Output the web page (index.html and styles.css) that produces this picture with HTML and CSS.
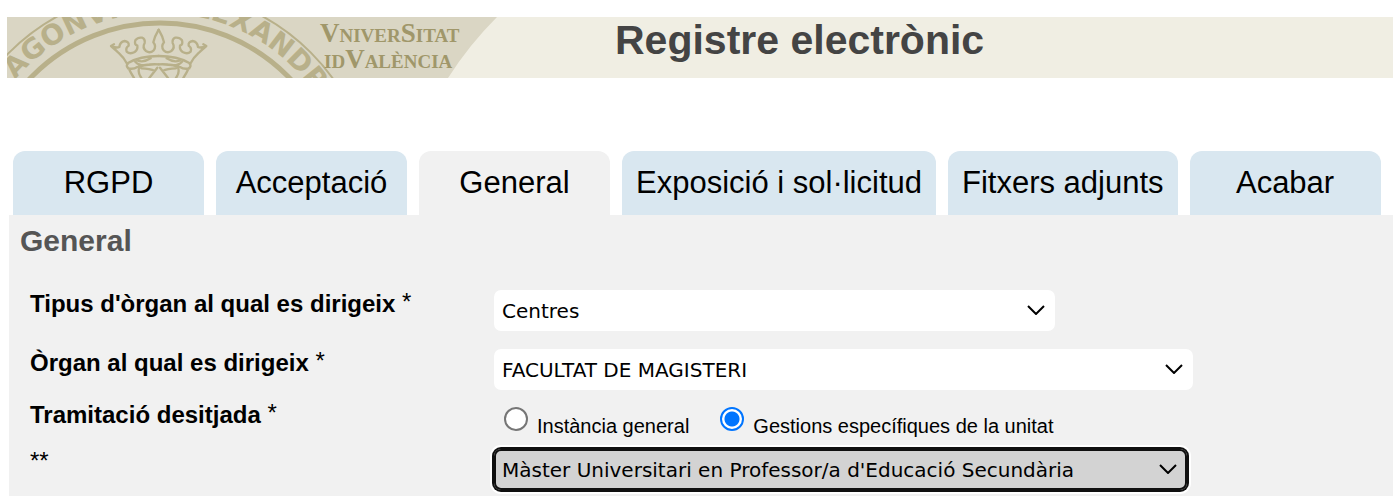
FILE: index.html
```html
<!DOCTYPE html>
<html lang="ca">
<head>
<meta charset="utf-8">
<title>Registre electrònic</title>
<link rel="stylesheet" href="styles.css">
</head>
<body>
<header class="banner">
  <svg class="logo" viewBox="7 17 490 61" role="img" aria-label="Universitat de València">
    <defs>
      <path id="ring" d="M-30 203A190 190 0 0 1 350 203"/>
      <g id="half-crown">
        <path d="M82 142Q72 122 56 108Q46 98 33 87L42 82M34 88Q50 94 58 90Q60 74 74 72Q88 74 86 86Q76 92 80 104Q90 113 104 105Q114 98 112 86Q102 82 106 70Q114 60 126 62Q136 66 134 78Q126 92 138 102Q150 110 161 100Q170 88 160 76Q164 58 176 38"/>
        <path d="M176 117Q120 117 84 138Q76 148 86 154Q92 168 102 183M84 154Q100 158 112 150Q140 140 176 142M106 134Q120 150 150 142M112 130Q130 138 152 124M172 152L148 183M118 152Q112 166 124 183M124 154Q150 154 164 162"/>
      </g>
    </defs>
    <path class="logo-bg" d="M7 17H497Q469 45 448 78H7Z"/>
    <g class="seal">
      <circle cx="160" cy="203" r="213" stroke-width="2"/>
      <circle cx="160" cy="203" r="180" stroke-width="5"/>
      <g class="crown" transform="translate(100 17) scale(.3333)">
        <use href="#half-crown"/>
        <use href="#half-crown" transform="translate(352 0) scale(-1 1)"/>
      </g>
    </g>
    <g class="motto">
      <text><textPath href="#ring" startOffset="134">AGONVM</textPath></text>
      <text><textPath href="#ring" startOffset="309">ALEXANDR</textPath></text>
    </g>
    <g class="wordmark">
      <text x="320" y="42"><tspan class="cap">V</tspan>NIVER<tspan class="cap">S</tspan>ITAT</text>
      <text x="324" y="68">ID<tspan class="cap">V</tspan>ALÈNCIA</text>
    </g>
  </svg>
  <h1 class="banner-title">Registre electrònic</h1>
</header>

<nav class="tabs">
  <a class="tab" href="#rgpd">RGPD</a>
  <a class="tab" href="#acceptacio">Acceptació</a>
  <a class="tab tab-active" href="#general" aria-current="page">General</a>
  <a class="tab" href="#exposicio">Exposició i sol·licitud</a>
  <a class="tab" href="#fitxers">Fitxers adjunts</a>
  <a class="tab" href="#acabar">Acabar</a>
</nav>

<main class="panel" id="general">
  <h2 class="panel-title">General</h2>
  <form class="form">
    <label class="label" for="tipus">Tipus d'òrgan al qual es dirigeix <span class="req">*</span></label>
    <div class="select-wrap select-short">
      <select class="select" id="tipus"><option>Centres</option></select>
      <svg class="chevron" viewBox="0 0 18 10"><path d="M1 1L9 9L17 1"/></svg>
    </div>

    <label class="label" for="organ">Òrgan al qual es dirigeix <span class="req">*</span></label>
    <div class="select-wrap select-long">
      <select class="select" id="organ"><option>FACULTAT DE MAGISTERI</option></select>
      <svg class="chevron" viewBox="0 0 18 10"><path d="M1 1L9 9L17 1"/></svg>
    </div>

    <span class="label" id="tramitacio">Tramitació desitjada <span class="req">*</span></span>
    <div class="radios" role="radiogroup" aria-labelledby="tramitacio">
      <input class="radio" type="radio" name="tramit" id="instancia">
      <label class="radio-label" for="instancia">Instància general</label>
      <input class="radio" type="radio" name="tramit" id="gestions" checked>
      <label class="radio-label" for="gestions">Gestions específiques de la unitat</label>
    </div>

    <label class="label" for="gestio"><span class="req">**</span></label>
    <div class="select-wrap select-medium">
      <select class="select select-focused" id="gestio"><option>Màster Universitari en Professor/a d'Educació Secundària</option></select>
      <svg class="chevron" viewBox="0 0 18 10"><path d="M1 1L9 9L17 1"/></svg>
    </div>
  </form>
</main>
</body>
</html>
```
FILE: styles.css
```css
* { box-sizing: border-box; }

body {
  margin: 0;
  background: #fff;
  color: #000;
  font-family: "Liberation Sans", Arial, sans-serif;
}

.banner {
  display: flex;
  gap: 118px;
  margin: 17px 0 0 7px;
  background: #f0eee3;
}

.logo {
  display: block;
  flex: none;
  width: 490px;
  overflow: hidden;
}

.logo-bg { fill: #dad6c4; }
.seal { fill: none; stroke: #b8b08a; }
.crown { stroke-width: 7; stroke-linecap: round; stroke-linejoin: round; }
.motto { fill: #b8b08a; font: 700 28px "DejaVu Sans", sans-serif; }
.wordmark { fill: #a0976a; font: 700 19px "Liberation Serif", serif; }
.cap { font-size: 27px; }

.banner-title {
  margin: 0;
  color: #444;
  font-size: 41px;
  line-height: 47px;
}

.tabs {
  display: flex;
  gap: 12px;
  margin: 73px 12px 0 13px;
}

.tab {
  min-width: 191px;
  padding: 0 14px;
  border-radius: 12px 12px 0 0;
  background: #d9e7f0;
  color: #000;
  font-size: 31px;
  line-height: 64px;
  text-align: center;
  text-decoration: none;
  white-space: nowrap;
}

.tab-active { background: #f1f1f1; }

.panel {
  min-height: 281px;
  margin-left: 9px;
  padding: 9px 0 5px 11px;
  background: #f1f1f1;
}

.panel-title {
  margin: 0 0 32px;
  color: #555;
  font-size: 30px;
  line-height: 34px;
}

.form {
  display: grid;
  grid-template-columns: 453px 1fr;
  align-items: start;
  padding-left: 10px;
}

.label {
  font-size: 24px;
  font-weight: 700;
  line-height: 28px;
}

.req {
  font-size: 24px;
  font-weight: 400;
  line-height: 20px;
  vertical-align: 2px;
}

.select-wrap {
  position: relative;
  max-width: 100%;
  margin-bottom: 18px;
  margin-left: 11px;
}

.select-wrap:has(#organ) { margin-bottom: 11px; }

.select-short { width: 561px; }
.select-medium { width: 693px; }
.select-long { width: 699px; }

.select {
  display: block;
  width: 100%;
  height: 41px;
  padding: 0 40px 0 8px;
  border: 0;
  border-radius: 7px;
  appearance: none;
  background: #fff;
  color: #000;
  font: 20px "DejaVu Sans", Verdana, sans-serif;
}

.select-focused {
  background: #d3d3d3;
  box-shadow: inset 0 0 0 2px #101010, 0 0 0 2px #101010, 0 0 0 4px #fff;
}

.chevron {
  position: absolute;
  top: 15px;
  right: 10px;
  width: 18px;
  fill: none;
  stroke: #000;
  stroke-width: 2;
  pointer-events: none;
}

.radios {
  display: flex;
  align-items: flex-start;
  height: 48px;
  padding-top: 6px;
}

.radio {
  width: 24px;
  height: 24px;
  margin: 0 9px 0 21px;
  border: 2px solid #767676;
  border-radius: 50%;
  appearance: none;
  background: #fff;
}

.radio:checked {
  border-color: #0075ff;
  background: radial-gradient(circle, #0075ff 7px, #fff 8px);
}

.radio-label {
  margin-right: 10px;
  padding-top: 7px;
  font-size: 20px;
  line-height: 24px;
}
```
